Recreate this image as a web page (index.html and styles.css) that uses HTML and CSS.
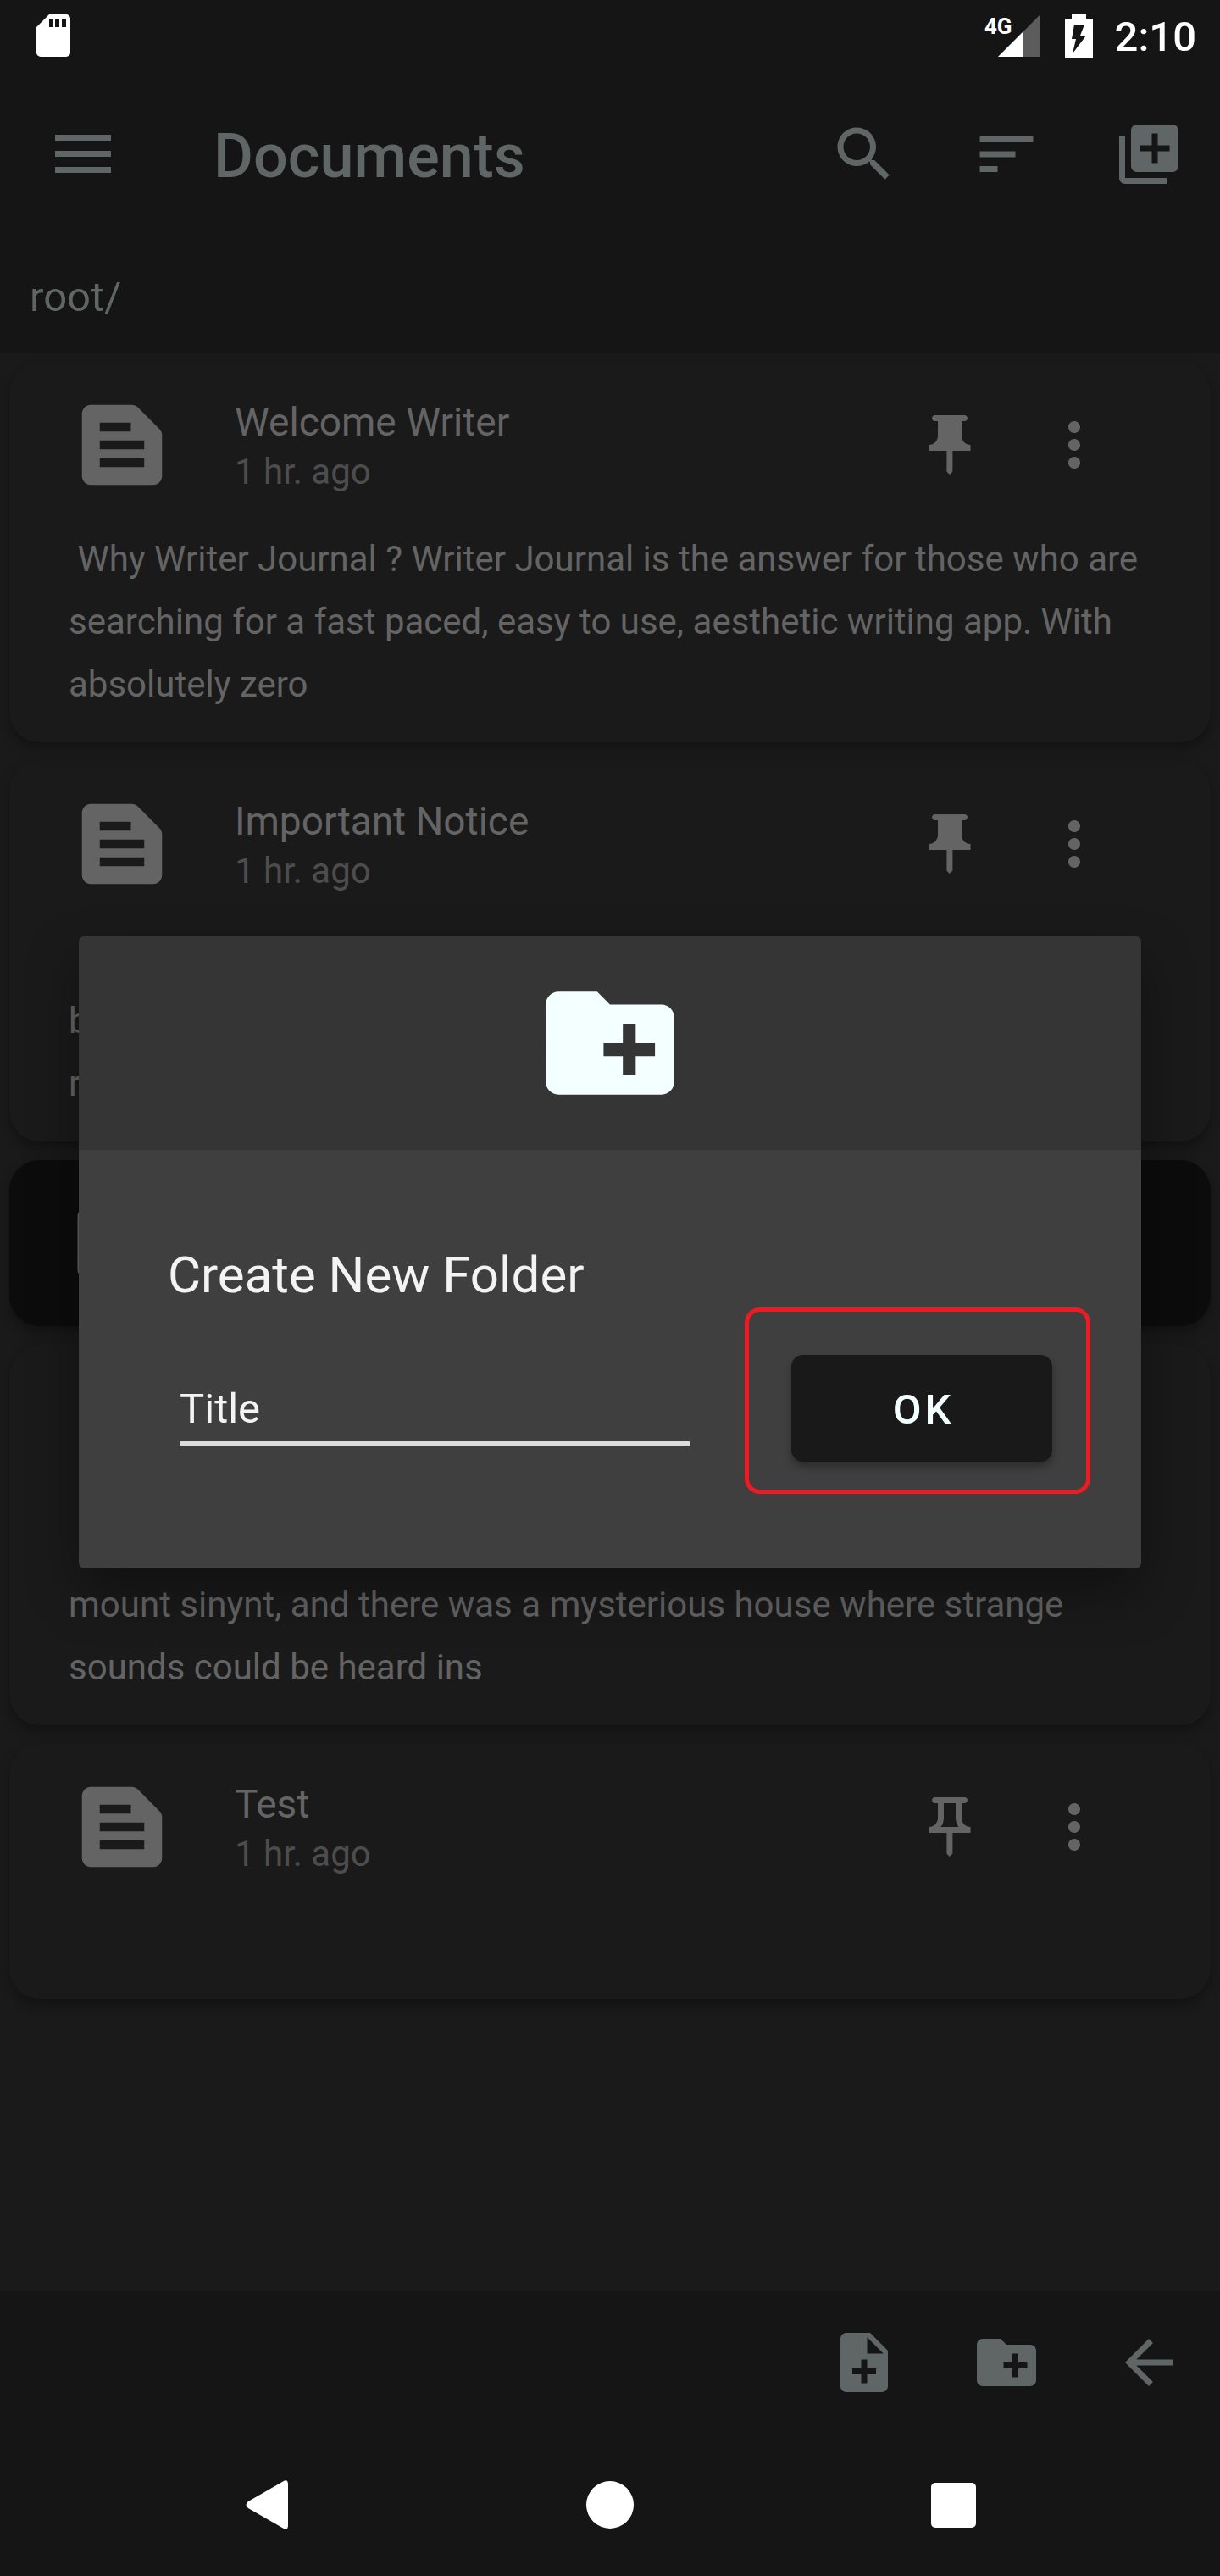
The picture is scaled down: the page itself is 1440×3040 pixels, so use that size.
FILE: index.html
```html
<!DOCTYPE html>
<html lang="en">
<head>
<meta charset="utf-8">
<meta name="viewport" content="width=device-width, initial-scale=1">
<title>Documents</title>
<link rel="stylesheet" href="styles.css">
</head>
<body>
<svg class="sprite" aria-hidden="true">
  <symbol id="doc" viewBox="0 0 24 24"><path d="M20.41 8.41l-4.83-4.83C15.21 3.21 14.7 3 14.17 3H5c-1.1 0-2 .9-2 2v14c0 1.1.9 2 2 2h14c1.1 0 2-.9 2-2V9.83c0-.53-.21-1.04-.59-1.42zM7 7h7v2H7V7zm10 10H7v-2h10v2zm0-4H7v-2h10v2z"/></symbol>
  <symbol id="folder" viewBox="0 0 24 24"><path d="M10 4H4c-1.1 0-1.99.9-1.99 2L2 18c0 1.1.9 2 2 2h16c1.1 0 2-.9 2-2V8c0-1.1-.9-2-2-2h-8l-2-2z"/></symbol>
  <symbol id="pin" viewBox="0 0 24 24"><path d="M16 9V4h1c.55 0 1-.45 1-1s-.45-1-1-1H7c-.55 0-1 .45-1 1s.45 1 1 1h1v5c0 1.66-1.34 3-3 3v2h5.97v7l1 1 1-1v-7H19v-2c-1.66 0-3-1.34-3-3z"/></symbol>
  <symbol id="pin-outline" viewBox="0 0 24 24"><path fill-rule="evenodd" d="M14 4v5c0 1.12.37 2.16 1 3H9c.65-.86 1-1.9 1-3V4h4zm3-2H7c-.55 0-1 .45-1 1s.45 1 1 1h1v5c0 1.66-1.34 3-3 3v2h5.97v7l1 1 1-1v-7H19v-2c-1.66 0-3-1.34-3-3V4h1c.55 0 1-.45 1-1s-.45-1-1-1z"/></symbol>
  <symbol id="more" viewBox="0 0 24 24"><path d="M12 8c1.1 0 2-.9 2-2s-.9-2-2-2-2 .9-2 2 .9 2 2 2zm0 2c-1.1 0-2 .9-2 2s.9 2 2 2 2-.9 2-2-.9-2-2-2zm0 6c-1.1 0-2 .9-2 2s.9 2 2 2 2-.9 2-2-.9-2-2-2z"/></symbol>
  <symbol id="new-folder" viewBox="0 0 24 24"><path d="M20 6h-8l-2-2H4c-1.11 0-1.99.89-1.99 2L2 18c0 1.11.89 2 2 2h16c1.11 0 2-.89 2-2V8c0-1.11-.89-2-2-2zm-1 8h-3v3h-2v-3h-3v-2h3V9h2v3h3v2z"/></symbol>
</svg>

<div class="status">
  <svg class="sd" viewBox="0 0 40 50" aria-hidden="true"><path fill-rule="evenodd" d="M15 0H35a5 5 0 0 1 5 5V45a5 5 0 0 1-5 5H5a5 5 0 0 1-5-5V15zM15 5v10h5V5zM22 5v10h5V5zM30 5v10h5V5z"/></svg>
  <div class="status-right">
    <div class="signal">
      <svg viewBox="0 0 49 49" aria-hidden="true"><path class="signal-off" d="M49 0V49H0z"/><path d="M30 19V49H0z"/></svg>
      <span class="network">4G</span>
    </div>
    <svg class="battery" viewBox="0 0 33 51" aria-hidden="true"><path fill-rule="evenodd" d="M8 0H25V5H33V51H0V5H8zM11 12L8 29H13L9 46L25 25H18L23 12z"/></svg>
    <time class="clock">2:10</time>
  </div>
</div>

<header class="appbar">
  <button class="menu" aria-label="Menu"><svg viewBox="0 0 66 46"><path d="M0 0H66V7H0zM0 19H66V26H0zM0 38H66V45H0z"/></svg></button>
  <h1>Documents</h1>
  <button class="action" aria-label="Search"><svg viewBox="0 0 24 24"><path d="M15.5 14h-.79l-.28-.27C15.41 12.59 16 11.11 16 9.5 16 5.91 13.09 3 9.5 3S3 5.91 3 9.5 5.91 16 9.5 16c1.61 0 3.09-.59 4.23-1.57l.27.28v.79l5 4.99L20.49 19l-4.99-5zm-6 0C7.01 14 5 11.99 5 9.5S7.01 5 9.5 5 14 7.01 14 9.5 11.99 14 9.5 14z"/></svg></button>
  <button class="action" aria-label="Sort"><svg viewBox="0 0 24 24"><path d="M3 18h6v-2H3v2zM3 6v2h18V6H3zm0 7h12v-2H3v2z"/></svg></button>
  <button class="action" aria-label="Add"><svg viewBox="0 0 24 24"><path d="M4 6H2v14c0 1.1.9 2 2 2h14v-2H4V6zm16-4H8c-1.1 0-2 .9-2 2v12c0 1.1.9 2 2 2h12c1.1 0 2-.9 2-2V4c0-1.1-.9-2-2-2zm-1 9h-4v4h-2v-4H9V9h4V5h2v4h4v2z"/></svg></button>
</header>
<nav class="path">root/</nav>

<main class="list">
  <article class="card">
    <div class="card-head">
      <svg class="kind"><use href="#doc"/></svg>
      <div class="names"><h2>Welcome Writer</h2><p>1 hr. ago</p></div>
      <button aria-label="Unpin"><svg><use href="#pin"/></svg></button>
      <button aria-label="More"><svg><use href="#more"/></svg></button>
    </div>
    <p class="excerpt"> Why Writer Journal ? Writer Journal is the answer for those who are searching for a fast paced, easy to use, aesthetic writing app. With absolutely zero</p>
  </article>
  <article class="card">
    <div class="card-head">
      <svg class="kind"><use href="#doc"/></svg>
      <div class="names"><h2>Important Notice</h2><p>1 hr. ago</p></div>
      <button aria-label="Unpin"><svg><use href="#pin"/></svg></button>
      <button aria-label="More"><svg><use href="#more"/></svg></button>
    </div>
    <p class="excerpt"><br>b<br>r</p>
  </article>
  <article class="card folder">
    <div class="card-head">
      <svg class="kind"><use href="#folder"/></svg>
    </div>
  </article>
  <article class="card">
    <div class="card-head"></div>
    <p class="excerpt"><br>mount sinynt, and there was a mysterious house where strange sounds could be heard ins</p>
  </article>
  <article class="card">
    <div class="card-head">
      <svg class="kind"><use href="#doc"/></svg>
      <div class="names"><h2>Test</h2><p>1 hr. ago</p></div>
      <button aria-label="Pin"><svg><use href="#pin-outline"/></svg></button>
      <button aria-label="More"><svg><use href="#more"/></svg></button>
    </div>
    <p class="excerpt"></p>
  </article>
</main>

<footer class="toolbar">
  <button class="action" aria-label="New document"><svg viewBox="0 0 24 24"><path d="M14 2H6c-1.1 0-1.99.9-1.99 2L4 20c0 1.1.89 2 1.99 2H18c1.1 0 2-.9 2-2V8l-6-6zm2 14h-3v3h-2v-3H8v-2h3v-3h2v3h3v2zm-3-7V3.500L18.500 9H13z"/></svg></button>
  <button class="action" aria-label="New folder"><svg><use href="#new-folder"/></svg></button>
  <button class="action" aria-label="Back"><svg viewBox="0 0 24 24"><path d="M20 11H7.830l5.590-5.590L12 4l-8 8 8 8 1.410-1.410L7.830 13H20v-2z"/></svg></button>
</footer>
<div class="system">
  <button aria-label="System back"><svg viewBox="0 0 58 58"><path d="M46 1.500Q52 -2 52 5V53Q52 60 46 56.500L5 33Q0 29 5 25z"/></svg></button>
  <button aria-label="Home"><svg viewBox="0 0 58 58"><circle cx="29" cy="29" r="28"/></svg></button>
  <button aria-label="Recent apps"><svg viewBox="0 0 58 58"><rect x="5" y="3" width="53" height="53" rx="5"/></svg></button>
</div>

<div class="overlay">
  <form class="dialog" role="dialog" aria-labelledby="dialog-title">
    <div class="dialog-head"><svg><use href="#new-folder"/></svg></div>
    <div class="dialog-body">
      <label id="dialog-title" class="dialog-title" for="folder-name">Create New Folder</label>
      <div class="dialog-row">
        <input id="folder-name" type="text" value="Title">
        <div class="marked"><button type="button" class="ok">OK</button></div>
      </div>
    </div>
  </form>
</div>
</body>
</html>
```

FILE: styles.css
```css
* { box-sizing: border-box; }

body {
  position: relative;
  display: flex;
  flex-direction: column;
  min-height: 100vh;
  margin: 0;
  background: #151515;
  color: #646464;
  font-family: Roboto, "Noto Sans", sans-serif;
  font-size: 42px;
}

h1, h2, p { margin: 0; font-weight: 400; }
svg { display: block; fill: currentColor; }
.sprite { position: absolute; width: 0; height: 0; }

button {
  display: flex;
  align-items: center;
  justify-content: center;
  padding: 0;
  border: 0;
  background: none;
  color: inherit;
  font: inherit;
}
button svg { width: 84px; height: 84px; }

/* System status bar */
.status {
  display: flex;
  align-items: center;
  justify-content: space-between;
  height: 84px;
  padding: 0 28px 0 43px;
  color: #fff;
}
.sd { width: 40px; height: 50px; }
.status-right { display: flex; align-items: center; }
.signal { position: relative; margin-right: 30px; }
.signal svg { width: 49px; height: 49px; }
.signal-off { fill: #5c5c5c; }
.network {
  position: absolute;
  top: 0;
  right: 32px;
  font-size: 26px;
  line-height: 26px;
  font-weight: 700;
}
.battery { width: 33px; height: 51px; margin-right: 26px; }
.clock { padding-top: 4px; font-size: 49px; line-height: 58px; font-weight: 500; }

/* App bar */
.appbar, .path, .toolbar { color: #5f6665; }
.appbar { display: flex; align-items: center; height: 196px; }
.menu { width: 196px; }
.menu svg { width: 66px; height: 46px; }
.appbar h1 {
  flex: 1;
  padding: 6px 0 0 56px;
  font-size: 72px;
  line-height: 84px;
  font-weight: 500;
}
.action { width: 168px; height: 168px; }
.path { padding: 42px 35px 36px; font-size: 49px; line-height: 58px; }

/* Document list */
.list {
  flex: 1;
  display: flex;
  flex-direction: column;
  gap: 22px;
  padding: 11px;
  background: #1a1a1a;
}
.card {
  padding-bottom: 31px;
  border-radius: 36px;
  background: #1a1a1a;
  box-shadow: 0 7px 14px rgba(0, 0, 0, 0.3);
}
.card-head {
  display: flex;
  align-items: center;
  height: 196px;
  padding: 0 88px 0 70px;
}
.card-head button { width: 147px; height: 147px; }
.kind { width: 126px; height: 126px; }
.names { flex: 1; padding: 5px 0 0 70px; }
.names h2 { font-size: 46px; line-height: 58px; }
.names p { color: #4d4d4d; line-height: 60px; }
.excerpt {
  min-height: 74px;
  padding: 0 70px;
  line-height: 74px;
  white-space: pre-wrap;
}
.folder { padding-bottom: 0; background: #0c0c0c; }

/* Bottom bars */
.toolbar { display: flex; justify-content: flex-end; height: 168px; }
.system {
  display: flex;
  align-items: center;
  justify-content: space-between;
  height: 168px;
  padding: 0 20%;
  color: #fff;
}
.system svg { width: 58px; height: 58px; }

/* New folder dialog */
.overlay {
  position: absolute;
  inset: 84px 0 168px;
  display: flex;
  align-items: center;
  padding: 0 93px;
}
.dialog {
  flex: 1;
  overflow: hidden;
  border-radius: 7px;
  background: #3f3f3f;
  box-shadow: 0 28px 60px rgba(0, 0, 0, 0.35);
}
.dialog-head {
  display: flex;
  align-items: center;
  justify-content: center;
  height: 252px;
  background: #353535;
  color: #f4ffff;
}
.dialog-head svg { width: 182px; height: 182px; }
.dialog-body { padding: 113px 105px 126px; color: #f3f3f3; }
.dialog-title { display: block; font-size: 60px; line-height: 70px; }
.dialog-row {
  display: flex;
  align-items: flex-start;
  gap: 119px;
  padding: 59px 0 0 14px;
}
.dialog-row input {
  flex: 1;
  min-width: 0;
  height: 108px;
  padding: 25px 0 0;
  border: 0;
  border-bottom: 7px solid #dcdcdc;
  border-radius: 0;
  background: none;
  color: inherit;
  font: inherit;
  font-size: 49px;
}
.ok {
  width: 308px;
  height: 126px;
  padding: 2px 0 0 4px;
  border-radius: 14px;
  background: #191919;
  color: #f4ffff;
  font-size: 49px;
  font-weight: 500;
  letter-spacing: 4px;
  box-shadow: 0 6px 10px rgba(0, 0, 0, 0.3);
}

/* Red outline that calls out the confirm button */
.marked { position: relative; }
.marked::after {
  content: "";
  position: absolute;
  inset: -56px -45px -38px -55px;
  border: 5px solid #ed1c24;
  border-radius: 18px;
  pointer-events: none;
}
```
